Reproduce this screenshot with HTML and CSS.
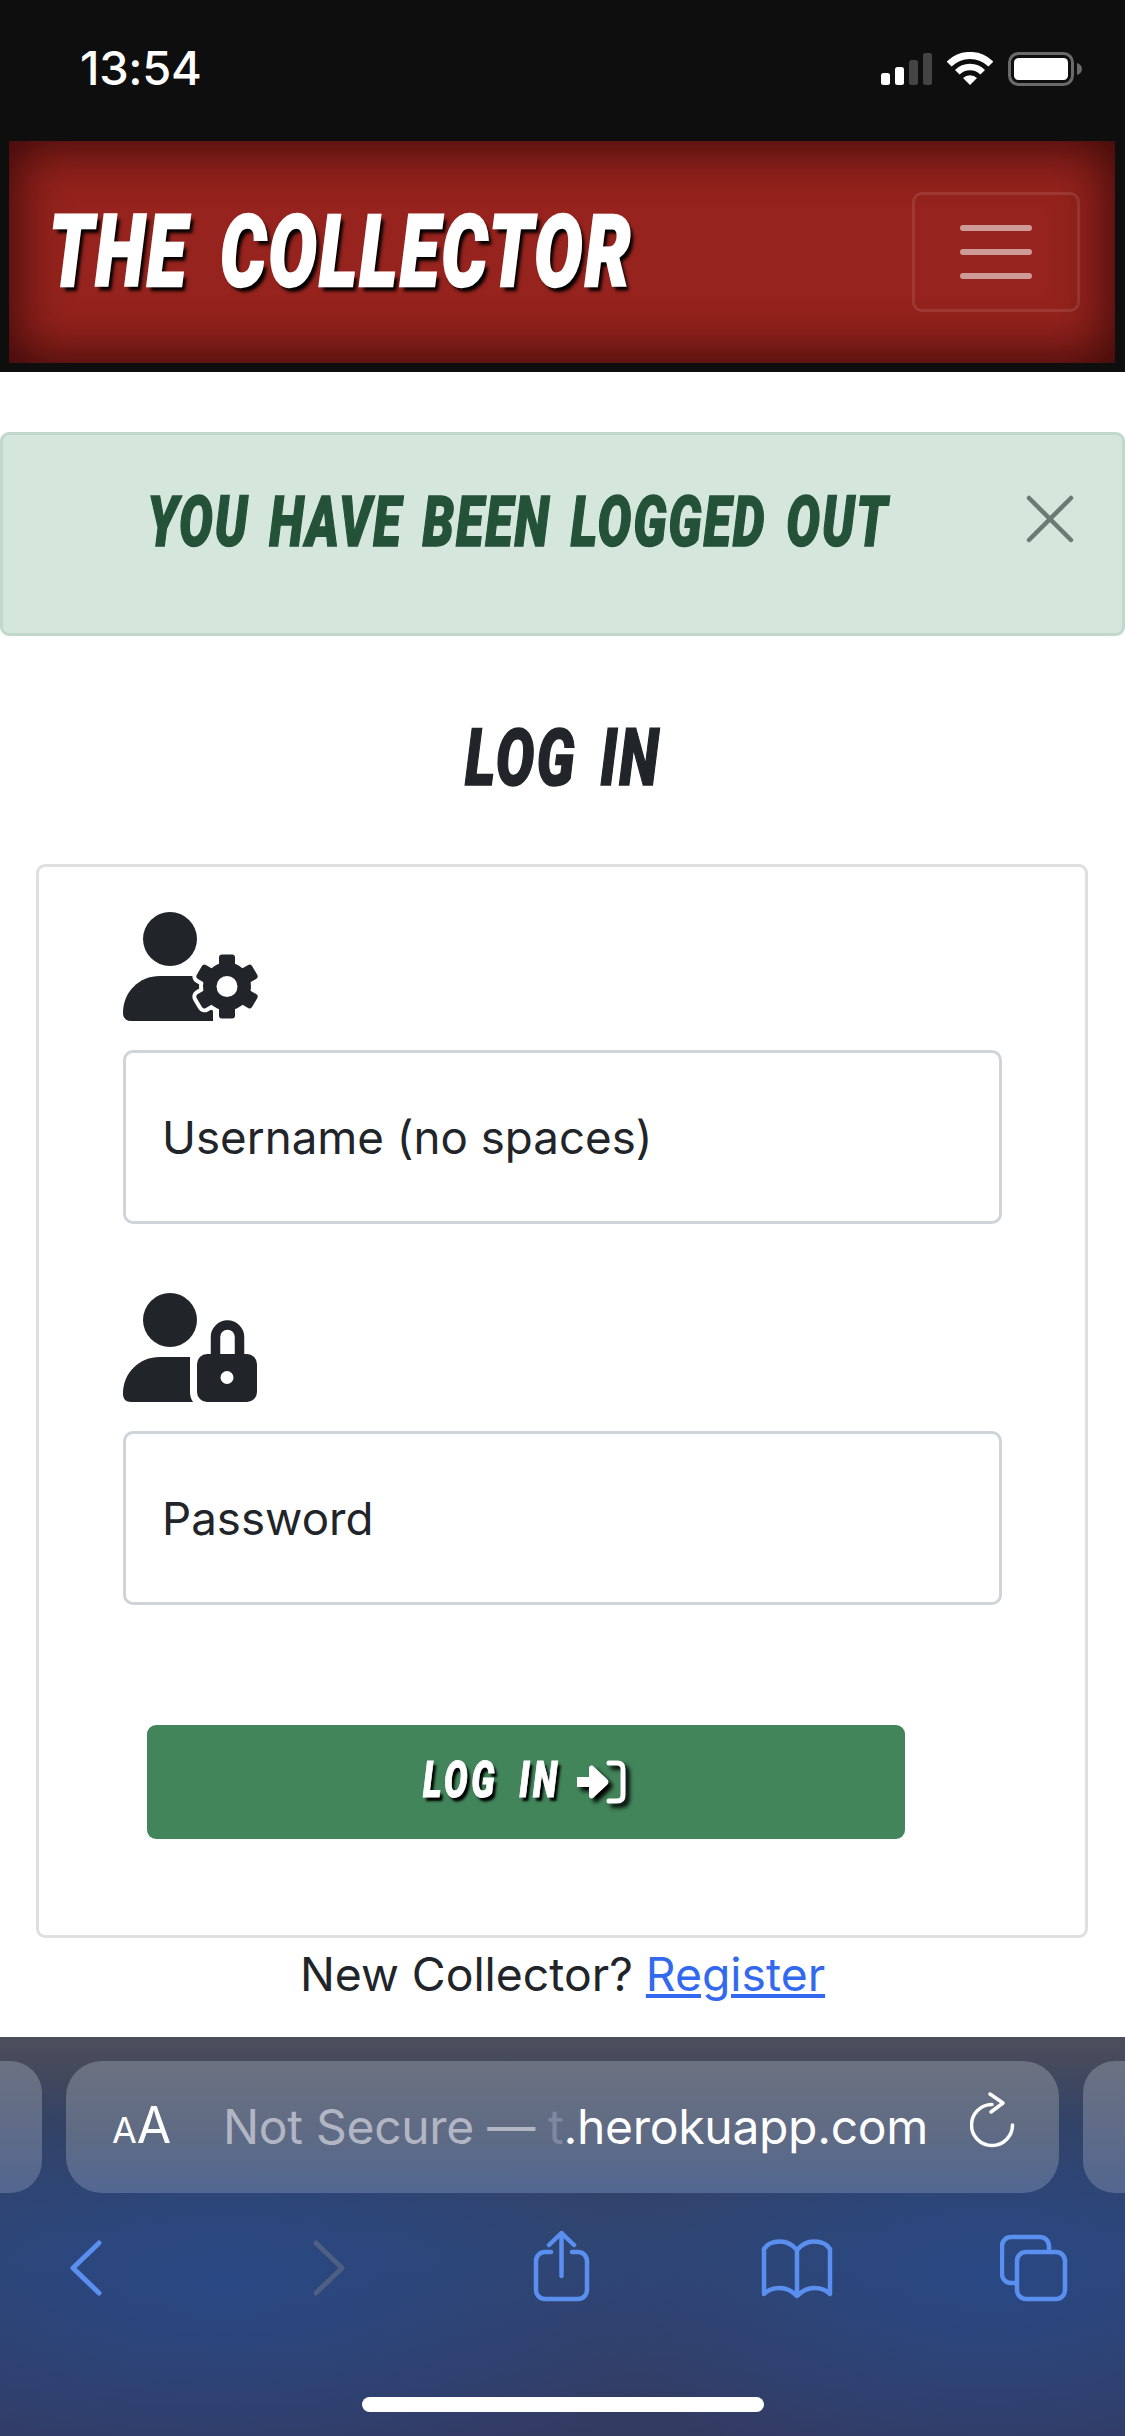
FILE: index.html
```html
<!DOCTYPE html>
<html lang="en">
<head>
    <meta charset="UTF-8">
    <meta name="viewport" content="width=device-width, initial-scale=1.0">
    <title>The Collector</title>
    <link rel="stylesheet" href="styles.css">
</head>
<body>
    <header class="top">
        <div class="status">
            <span class="time">13:54</span>
            <div class="status-icons">
                <svg class="signal" width="51" height="32" viewBox="0 0 51 32">
                    <rect x="0" y="20" width="9" height="12" rx="2.5" fill="#fff"/>
                    <rect x="14" y="14" width="9" height="18" rx="2.5" fill="#fff"/>
                    <rect x="28" y="7" width="9" height="25" rx="2.5" fill="#444"/>
                    <rect x="42" y="0" width="9" height="32" rx="2.5" fill="#444"/>
                </svg>
                <svg class="wifi" width="46" height="34" viewBox="0 0 46 34" fill="none" stroke="#fff">
                    <path d="M2.1 12.1A29.5 29.5 0 0 1 43.9 12.1" stroke-width="7"/>
                    <path d="M10.3 20.3A18 18 0 0 1 35.7 20.3" stroke-width="6.5"/>
                    <path d="M23 33L16 26A10 10 0 0 1 30 26Z" fill="#fff" stroke="none"/>
                </svg>
                <svg class="battery" width="74" height="34" viewBox="0 0 74 34">
                    <rect x="1.5" y="1.5" width="63" height="31" rx="9" fill="none" stroke="#6a6a6a" stroke-width="3"/>
                    <rect x="6" y="6" width="54" height="22" rx="4.5" fill="#fff"/>
                    <path d="M69 11c3 1 5 3 5 6s-2 5-5 6z" fill="#6a6a6a"/>
                </svg>
            </div>
        </div>
        <nav class="navbar">
            <span class="brand bangers">THE COLLECTOR</span>
            <button class="toggler" type="button" aria-label="Menu">
                <span></span><span></span><span></span>
            </button>
        </nav>
    </header>

    <main class="page">
        <div class="alert">
            <div class="alert-text"><span class="bangers">YOU HAVE BEEN LOGGED OUT</span></div>
            <svg class="alert-close" width="48" height="48" viewBox="0 0 48 48" fill="none" stroke="#6c7a74" stroke-width="4.5" stroke-linecap="round">
                <path d="M3 3L45 45M45 3L3 45"/>
            </svg>
        </div>

        <h1 class="title"><span class="bangers">LOG IN</span></h1>

        <form class="card">
            <svg class="field-icon" width="135" height="109" viewBox="0 0 135 109">
                <defs>
                    <g id="gear">
                        <circle r="24"/>
                        <rect x="-8" y="-32" width="16" height="64" rx="3"/>
                        <rect x="-8" y="-32" width="16" height="64" rx="3" transform="rotate(60)"/>
                        <rect x="-8" y="-32" width="16" height="64" rx="3" transform="rotate(120)"/>
                    </g>
                </defs>
                <circle cx="47" cy="27" r="27" fill="#212529"/>
                <path d="M37 64H90V109H8C3 109 0 106 0 101C0 80 16 64 37 64Z" fill="#212529"/>
                <g transform="translate(104 74.5)">
                    <use href="#gear" fill="#fff" stroke="#fff" stroke-width="8" stroke-linejoin="round"/>
                    <use href="#gear" fill="#212529"/>
                    <circle r="10.5" fill="#fff"/>
                </g>
            </svg>
            <input class="field" type="text" placeholder="Username (no spaces)">

            <svg class="field-icon field-icon-next" width="135" height="109" viewBox="0 0 135 109">
                <circle cx="47" cy="27" r="27" fill="#212529"/>
                <path d="M37 64H67V99C67 103 68 106 70 109H8C3 109 0 106 0 101C0 80 16 64 37 64Z" fill="#212529"/>
                <path d="M92.5 62V44A12 12 0 0 1 116.500 44V62" fill="none" stroke="#212529" stroke-width="9.500"/>
                <rect x="74" y="61" width="60" height="48" rx="10" fill="#212529"/>
                <circle cx="104" cy="84.500" r="6.500" fill="#fff"/>
            </svg>
            <input class="field" type="password" placeholder="Password">

            <button class="login" type="button">
                <span class="bangers">LOG IN</span>
                <svg class="login-icon" width="50" height="44" viewBox="0 0 50 44">
                    <path d="M1 17H13V8C13 6 15 5 17 6L31 19C33 21 33 23 31 25L17 38C15 39 13 38 13 36V27H1Z" fill="#fff"/>
                    <path d="M33 3H41C45 3 47 5 47 9V35C47 39 45 41 41 41H33" fill="none" stroke="#fff" stroke-width="5" stroke-linecap="round"/>
                </svg>
            </button>
        </form>

        <p class="register">New Collector? <a href="#">Register</a></p>
    </main>

    <footer class="browser">
        <div class="tabs-row">
            <div class="tab-peek tab-peek-left"></div>
            <div class="url-bar">
                <span class="aa"><small>A</small>A</span>
                <span class="url"><span class="url-dim">Not Secure — </span><span class="url-fade">t</span>.herokuapp.com</span>
                <svg class="reload" width="46" height="56" viewBox="0 0 46 56" fill="none" stroke="#fff" stroke-width="3.500" stroke-linecap="round" stroke-linejoin="round">
                    <path d="M22 12.500A20.500 20.500 0 1 0 42.500 33"/>
                    <path d="M20 2L33 11L21 20"/>
                </svg>
            </div>
            <div class="tab-peek tab-peek-right"></div>
        </div>
        <div class="toolbar">
            <svg class="tool tool-back" width="34" height="72" viewBox="0 0 34 72" fill="none" stroke="#5a8fef" stroke-width="5" stroke-linecap="round" stroke-linejoin="round">
                <path d="M30 13L4 38L30 63"/>
            </svg>
            <svg class="tool tool-forward" width="34" height="72" viewBox="0 0 34 72" fill="none" stroke="#4d5f82" stroke-width="5" stroke-linecap="round" stroke-linejoin="round">
                <path d="M4 13L30 38L4 63"/>
            </svg>
            <svg class="tool tool-share" width="57" height="72" viewBox="0 0 57 72" fill="none" stroke="#5a8fef" stroke-width="4.500" stroke-linecap="round" stroke-linejoin="round">
                <path d="M18 22H12A9 9 0 0 0 3 31V60A9 9 0 0 0 12 69H45A9 9 0 0 0 54 60V31A9 9 0 0 0 45 22H39"/>
                <path d="M28.500 3V46M16 15L28.500 3L41 15"/>
            </svg>
            <svg class="tool tool-book" width="73" height="72" viewBox="0 -9 73 72" fill="none" stroke="#5a8fef" stroke-width="4.500" stroke-linecap="round" stroke-linejoin="round">
                <path d="M36 11C31 5 25 2.500 19 2.500C12 2.500 6 5 3 10V55C7 51 13 49 19 49C25 49 31 52 36 57C41 52 47 49 53 49C59 49 65 51 69 55V10C66 5 60 2.500 53 2.500C47 2.500 41 5 36 11V57"/>
            </svg>
            <svg class="tool tool-tabs" width="69" height="72" viewBox="0 -5 69 72" fill="none" stroke="#5a8fef" stroke-width="4.500">
                <path d="M17 48H11A9 9 0 0 1 2 39V11A9 9 0 0 1 11 2H40A9 9 0 0 1 49 11V17"/>
                <rect x="17" y="17" width="48" height="47" rx="9"/>
            </svg>
        </div>
        <div class="home-bar"></div>
    </footer>
</body>
</html>
```

FILE: styles.css
```css
body {
    margin: 0;
    width: 1125px;
    height: 2436px;
    display: flex;
    flex-direction: column;
    overflow: hidden;
    background-color: #fff;
    color: #212529;
    font-family: Inter, "Noto Sans", sans-serif;
}

/* stand-in for the comic web font the site uses */
.bangers {
    display: inline-block;
    font-family: Roboto, sans-serif;
    font-weight: 900;
    font-style: italic;
    white-space: nowrap;
    transform: scaleX(.72);
    -webkit-text-stroke: 1.5px currentColor;
}

.top {
    background-color: #0e0e0e;
    height: 372px;
    flex-shrink: 0;
}
.status {
    height: 141px;
    box-sizing: border-box;
    padding: 42px 43px 0 80px;
    display: flex;
    justify-content: space-between;
    align-items: flex-start;
    color: #fff;
}
.time {
    font-size: 47px;
    font-weight: 500;
    line-height: 52px;
    letter-spacing: -.3px;
}
.status-icons {
    display: flex;
    align-items: flex-start;
    padding-top: 10px;
}
.signal {
    margin-top: 1px;
}
.wifi {
    margin-left: 15px;
}
.battery {
    margin-left: 15px;
}

.navbar {
    height: 222px;
    margin: 0 10px 0 9px;
    display: flex;
    align-items: center;
    justify-content: space-between;
    background-color: #96231d;
    box-shadow: inset 0 0 52px 6px rgba(40, 5, 5, .85);
}
.brand {
    color: #fff;
    font-size: 100px;
    line-height: 100px;
    margin-left: 40px;
    letter-spacing: 3.4px;
    word-spacing: 16px;
    text-shadow: 5px 5px 4px #000;
    transform-origin: left center;
    -webkit-text-stroke-width: 2.5px;
}
.toggler {
    width: 168px;
    height: 120px;
    margin-right: 35px;
    padding: 0;
    box-sizing: border-box;
    background: none;
    border: 3px solid rgba(255, 255, 255, .1);
    border-radius: 10px;
    display: flex;
    flex-direction: column;
    align-items: center;
    justify-content: center;
    gap: 18px;
}
.toggler span {
    display: block;
    width: 72px;
    height: 6px;
    border-radius: 3px;
    background-color: rgba(255, 255, 255, .55);
}

.page {
    flex: 1;
    overflow: hidden;
}
.alert {
    margin-top: 60px;
    height: 204px;
    box-sizing: border-box;
    padding-top: 60px;
    display: flex;
    align-items: flex-start;
    background-color: #d5e6dc;
    border: 3px solid #c1d9cd;
    border-radius: 9px;
}
.alert-text {
    width: 1027px;
    margin: -4px 4px 0 0;
    text-align: center;
    color: #245239;
    font-size: 70px;
    line-height: 60px;
}
.alert-text .bangers {
    letter-spacing: 2.6px;
    word-spacing: 8px;
}
.alert-close {
    margin-left: -8px;
    margin-top: 0;
}
.title {
    margin: 85px 0 73px;
    height: 70px;
    text-align: center;
    font-size: 80px;
    line-height: 70px;
    font-weight: 900;
}
.title .bangers {
    letter-spacing: 3px;
    word-spacing: 10px;
}

.card {
    margin: 0 37px 0 36px;
    height: 1074px;
    box-sizing: border-box;
    padding: 45px 85px 0 84px;
    border: 3px solid #dfdfdf;
    border-radius: 9px;
}
.field-icon {
    display: block;
    margin-bottom: 29px;
}
.field-icon-next {
    margin-top: 69px;
}
.field {
    display: block;
    width: 879px;
    height: 174px;
    box-sizing: border-box;
    padding: 0 36px;
    font-family: Inter, sans-serif;
    font-size: 45.7px;
    color: #212529;
    border: 3px solid #ced4da;
    border-radius: 10px;
    background-color: #fff;
}
.field::placeholder {
    color: #212529;
    opacity: 1;
}
.login {
    display: flex;
    align-items: center;
    justify-content: center;
    width: 758px;
    height: 114px;
    margin: 120px 0 0 24px;
    padding: 0;
    background-color: #42855a;
    border: none;
    border-radius: 9px;
    color: #fff;
}
.login .bangers {
    margin: -4px -38px 0 -3px;
    font-size: 49px;
    letter-spacing: 5px;
    word-spacing: 12px;
    text-shadow: 4px 4px 3px #000;
    transform-origin: left center;
    -webkit-text-stroke-width: 1px;
}
.login-icon {
    filter: drop-shadow(4px 4px 2px #000);
}
.register {
    margin: 6px 0 0;
    text-align: center;
    font-size: 46.3px;
    line-height: 60px;
}
.register a {
    color: #3269ee;
}

.browser {
    height: 399px;
    flex-shrink: 0;
    display: flex;
    flex-direction: column;
    background:
        radial-gradient(ellipse 480px 220px at 20% 62%, rgba(40, 72, 135, .85), transparent),
        radial-gradient(ellipse 420px 220px at 88% 60%, rgba(40, 72, 135, .85), transparent),
        linear-gradient(#4c4e5a, #35415f 22%, #30456f 55%, #333a60);
}
.tabs-row {
    margin-top: 24px;
    height: 132px;
    display: flex;
    gap: 24px;
    flex-shrink: 0;
}
.tab-peek {
    width: 42px;
    background: linear-gradient(#6b7180, #536690);
}
.tab-peek-left {
    border-radius: 0 32px 32px 0;
}
.tab-peek-right {
    flex: 1;
    border-radius: 32px 0 0 32px;
}
.url-bar {
    width: 993px;
    box-sizing: border-box;
    padding: 0 43px 0 46px;
    display: flex;
    align-items: center;
    background: linear-gradient(#6b7180, #5f6b84 55%, #526792);
    border-radius: 36px;
    color: #fff;
}
.aa {
    font-size: 50px;
    line-height: 132px;
    width: 111px;
    flex-shrink: 0;
}
.aa small {
    font-size: 36px;
}
.url {
    font-size: 48px;
    line-height: 132px;
    white-space: nowrap;
    letter-spacing: -.3px;
}
.url-dim {
    color: #b2b6c4;
}
.url-fade {
    color: #7f88a0;
}
.reload {
    margin: -14px 0 0 auto;
}

.toolbar {
    margin-top: 37px;
    height: 72px;
    display: flex;
    flex-shrink: 0;
}
.tool {
    flex-shrink: 0;
}
.tool-back {
    margin-left: 69px;
}
.tool-forward {
    margin-left: 209px;
}
.tool-share {
    margin-left: 187px;
}
.tool-book {
    margin-left: 171px;
}
.tool-tabs {
    margin-left: 166px;
}
.home-bar {
    width: 402px;
    height: 15px;
    margin: 95px 0 0 362px;
    border-radius: 8px;
    background-color: #fff;
}
```
